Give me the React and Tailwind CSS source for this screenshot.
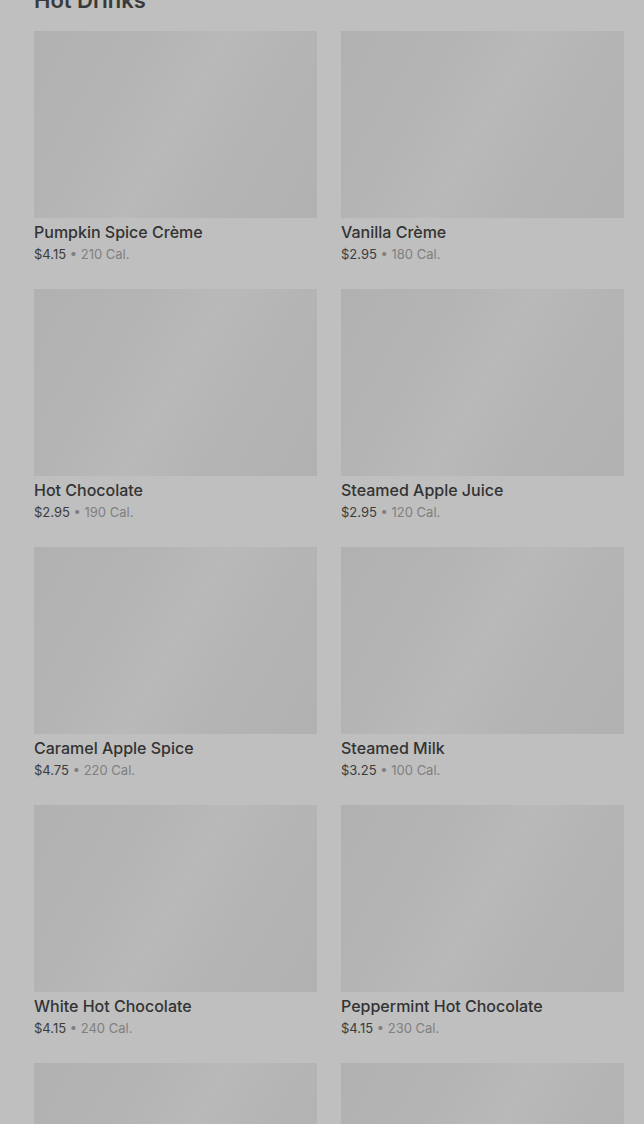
import React from 'react';

const drinks = [
  { name: 'Pumpkin Spice Crème', price: '$4.15', cal: '210 Cal.' },
  { name: 'Vanilla Crème', price: '$2.95', cal: '180 Cal.' },
  { name: 'Hot Chocolate', price: '$2.95', cal: '190 Cal.' },
  { name: 'Steamed Apple Juice', price: '$2.95', cal: '120 Cal.' },
  { name: 'Caramel Apple Spice', price: '$4.75', cal: '220 Cal.' },
  { name: 'Steamed Milk', price: '$3.25', cal: '100 Cal.' },
  { name: 'White Hot Chocolate', price: '$4.15', cal: '240 Cal.' },
  { name: 'Peppermint Hot Chocolate', price: '$4.15', cal: '230 Cal.' },
  { name: 'Chai Tea Latte', price: '$4.45', cal: '240 Cal.' },
  { name: 'Matcha Tea Latte', price: '$4.45', cal: '240 Cal.' },
];

const DrinkCard = ({ drink }) => (
  <div className="flex flex-col">
    <div className="h-[187px] w-full bg-[linear-gradient(120deg,#b1b1b1_0%,#b4b4b4_30%,#b9b9b9_50%,#b4b4b4_70%,#b1b1b1_100%)]"></div>
    <div className="mt-[2px] text-base leading-6 font-medium text-[#333333]">{drink.name}</div>
    <div className="mt-px text-[13px] leading-[19px] text-[#3c3c3c]">
      {drink.price}
      <span className="text-[#808080]"> • {drink.cal}</span>
    </div>
  </div>
);

function App() {
  return (
    <div className="h-[1124px] overflow-hidden bg-[#bfbfbf] pl-[34px] pr-[20px] font-['Inter',sans-serif] text-[#333]">
      <h2 className="-mt-[16px] mb-[15px] text-[22px] leading-8 font-semibold text-[#3a3a3a]">Hot Drinks</h2>
      <div className="grid grid-cols-2 gap-x-6 gap-y-[25px]">
        {drinks.map((d) => (
          <DrinkCard key={d.name} drink={d} />
        ))}
      </div>
    </div>
  );
}

export default App;
